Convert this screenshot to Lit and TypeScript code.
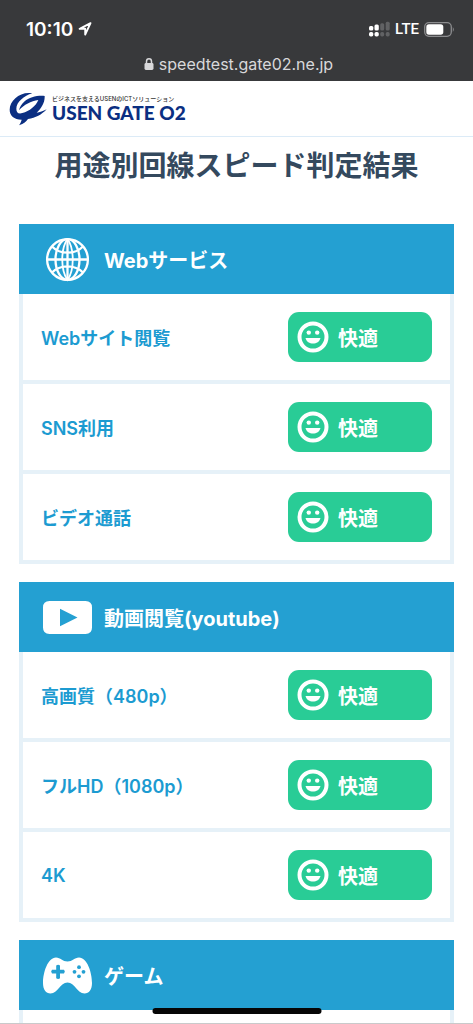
import { LitElement, html, css, svg } from "lit";
import { customElement, property } from "lit/decorators.js";

type IconName = "web" | "video" | "game";

interface Category {
  icon: IconName;
  title: string;
  items: string[];
}

const CATEGORIES: Category[] = [
  { icon: "web", title: "Webサービス", items: ["Webサイト閲覧", "SNS利用", "ビデオ通話"] },
  { icon: "video", title: "動画閲覧(youtube)", items: ["高画質（480p）", "フルHD（1080p）", "4K"] },
  { icon: "game", title: "ゲーム", items: [] },
];

const ICONS = {
  web: svg`<g fill="none" stroke="#fff" stroke-width="2.3">
    <circle cx="24.5" cy="24.5" r="20.4"/>
    <ellipse cx="24.5" cy="24.5" rx="12" ry="20.4"/>
    <path d="M24.500 4V45M4 24.500H45M9 11.500Q15 17.700 24.500 17.700T40 11.500M9 37.500Q15 31.300 24.500 31.300T40 37.500"/>
    <path stroke-width="1.800" d="M24.500 4C17.500 14 17.500 35 24.500 45C31.500 35 31.500 14 24.500 4"/>
  </g>`,
  video: svg`<path fill="#fff" fill-rule="evenodd" d="M6.500 8h36q6.500 0 6.500 6.500v20q0 6.500-6.500 6.500h-36q-6.500 0-6.500-6.500v-20q0-6.500 6.500-6.500zM17 15.800v17.400l17.500-8.700z"/>`,
  game: svg`<path fill="#fff" d="M13 6.500C17.500 6.500 19.500 10.500 24.500 10.500S31.500 6.500 36 6.500C44 6.500 49 21 49 32C49 38.500 46 42.500 41.500 42.500C34 42.500 32 31.500 24.500 31.500S15 42.500 7.500 42.500C3 42.500 0 38.500 0 32C0 21 5 6.500 13 6.500Z"/>
    <g fill="#24a0d2">
      <path d="M13.200 14.500q1.900-1.500 3.800 0v4.300h4q1.700 1.800 0 3.600h-4v4.800q-1.900 1.500-3.800 0v-4.800h-4.200q-1.700-1.800 0-3.600h4.200z"/>
      <circle cx="36" cy="16.200" r="1.900"/><circle cx="31.500" cy="20.800" r="1.900"/>
      <circle cx="40.500" cy="20.800" r="1.900"/><circle cx="36" cy="25.300" r="1.900"/>
    </g>`,
};

@customElement("status-bar")
class StatusBar extends LitElement {
  static styles = css`
    :host {
      display: block;
      background: #38393b;
      color: #fff;
      padding: 17px 18px 5px 26px;
    }
    .row { display: flex; align-items: center; height: 24px; }
    .time { font-size: 19px; font-weight: 600; }
    .arrow { margin-left: 5px; }
    .right { margin-left: auto; display: flex; align-items: center; gap: 5px; }
    .lte { font-family: Roboto, sans-serif; font-size: 15px; font-weight: 500; }
    .url {
      display: flex;
      align-items: center;
      justify-content: center;
      gap: 5px;
      width: 100%;
      height: 24px;
      margin: 11px 0 0;
      padding: 0 4px 0 0;
      border: 0;
      background: none;
      color: #d8d8da;
      font: inherit;
      font-size: 16px;
    }
    svg { display: block; flex: none; }
  `;
  render() {
    return html`
      <div class="row">
        <span class="time">10:10</span>
        <svg class="arrow" width="14" height="14" viewBox="0 0 14 14" fill="none" stroke="#fff" stroke-width="1.900" stroke-linejoin="round">
          <path d="M12.500 1.200L1.600 6.800H7.200V12.600Z"/>
        </svg>
        <div class="right">
          <svg width="21" height="16" viewBox="0 0 21 16">
            <g fill="#fff"><rect x="0" y="5" width="4.300" height="4.500" rx="1.500"/><rect x="5.500" y="3.500" width="4.300" height="6" rx="1.500"/>
            <rect x="0" y="11" width="4.300" height="4.500" rx="1.700"/><rect x="5.500" y="11" width="4.300" height="4.500" rx="1.700"/></g>
            <g fill="#616264"><rect x="11.200" y="2.200" width="4" height="7.300" rx="1.500"/><rect x="16.700" y="0.700" width="4" height="8.800" rx="1.500"/>
            <rect x="11.200" y="11" width="4" height="4.500" rx="1.700"/><rect x="16.700" y="11" width="4" height="4.500" rx="1.700"/></g>
          </svg>
          <span class="lte">LTE</span>
          <svg width="31" height="15" viewBox="0 0 31 15">
            <rect x="0.700" y="0.700" width="26.600" height="13.600" rx="4.200" fill="none" stroke="#8b8c8e" stroke-width="1.300"/>
            <rect x="2.300" y="2.300" width="17" height="10.400" rx="2.600" fill="#fff"/>
            <path d="M28.800 5q2 2.500 0 5z" fill="#8b8c8e"/>
          </svg>
        </div>
      </div>
      <button class="url" type="button">
        <svg width="10" height="12" viewBox="0 0 10 12">
          <rect x="0.500" y="5" width="9" height="7" rx="1.400" fill="#d8d8da"/>
          <path d="M2.500 5.500V3.500a2.500 2.700 0 0 1 5 0V5.500" fill="none" stroke="#d8d8da" stroke-width="1.500"/>
        </svg>
        <span>speedtest.gate02.ne.jp</span>
      </button>
    `;
  }
}

@customElement("site-header")
class SiteHeader extends LitElement {
  static styles = css`
    :host { display: block; background: #fff; border-bottom: 1px solid #dcebf7; }
    .brand {
      display: flex;
      align-items: center;
      gap: 5px;
      height: 55px;
      padding-left: 9px;
      color: #0b2f82;
      text-decoration: none;
    }
    .words { display: flex; flex-direction: column; white-space: nowrap; }
    .tag { font-size: 6px; line-height: 9px; font-weight: 500; color: #333; }
    .name { font-family: Lato, sans-serif; font-size: 19px; line-height: 20px; font-weight: 900; }
    svg { display: block; }
  `;
  render() {
    return html`
      <a class="brand" href="#">
        <svg width="38" height="34" viewBox="10 7 114 102" fill="#0b2f82">
          <path d="M80 11C45 4 12 32 12 60C12 78 25 89 48 90C47 95 44 101 40 107C55 102 62 95 67 88C90 85 108 75 123 59C112 65 102 68 93 69C108 56 118 38 117 19C95 17 70 23 57 35C47 44 42 53 40 62C55 45 76 34 98 31C90 50 72 64 50 70C38 74 32 68 32 57C32 38 55 18 80 11Z"/>
        </svg>
        <span class="words">
          <span class="tag">ビジネスを支えるUSENのICTソリューション</span>
          <span class="name">USEN GATE O2</span>
        </span>
      </a>
    `;
  }
}

@customElement("result-badge")
class ResultBadge extends LitElement {
  static styles = css`
    :host {
      display: flex;
      align-items: center;
      gap: 9px;
      box-sizing: border-box;
      width: 144px;
      height: 50px;
      padding-left: 9px;
      border-radius: 11px;
      background: #29cc96;
      color: #fff;
      font-size: 20px;
      font-weight: 700;
    }
    svg { display: block; }
  `;
  render() {
    return html`
      <svg width="32" height="32" viewBox="0 0 32 32" aria-hidden="true">
        <circle cx="16" cy="16" r="13.500" fill="none" stroke="#fff" stroke-width="4"/>
        <circle cx="11.800" cy="11.600" r="2.200" fill="#fff"/>
        <circle cx="20.200" cy="11.600" r="2.200" fill="#fff"/>
        <path d="M8.500 17h15c-1 3.800-4 5.500-7.500 5.500S9.500 20.800 8.500 17z" fill="#fff"/>
      </svg>
      <span>快適</span>
    `;
  }
}

@customElement("category-card")
class CategoryCard extends LitElement {
  @property({ attribute: false }) category!: Category;

  static styles = css`
    :host { display: block; }
    .head {
      display: flex;
      align-items: center;
      gap: 12px;
      height: 70px;
      padding: 0 24px;
      background: #24a0d2;
      color: #fff;
    }
    .head svg { display: block; flex: none; }
    .title { margin: 0; font-size: 20px; font-weight: 700; }
    .list {
      margin: 0;
      padding: 0;
      min-height: 90px;
      list-style: none;
      border: solid #e6f1f8;
      border-width: 0 4px;
    }
    .item {
      display: flex;
      align-items: center;
      justify-content: space-between;
      padding: 18px;
      border-bottom: 4px solid #e6f1f8;
      color: #1c9bd1;
      font-size: 18px;
      font-weight: 600;
    }
  `;
  render() {
    const { icon, title, items } = this.category;
    return html`
      <header class="head">
        <svg width="49" height="49" viewBox="0 0 49 49" aria-hidden="true">${ICONS[icon]}</svg>
        <h2 class="title">${title}</h2>
      </header>
      <ul class="list">
        ${items.map((label) => html`<li class="item"><span>${label}</span><result-badge></result-badge></li>`)}
      </ul>
    `;
  }
}

@customElement("app-root")
class AppRoot extends LitElement {
  static styles = css`
    :host {
      display: block;
      position: relative;
      box-sizing: border-box;
      height: 100vh;
      overflow: hidden;
      background: #fff;
      border-bottom: 1px solid #c9cacb;
      font-family: Inter, "Noto Sans CJK JP", sans-serif;
    }
    .main { padding: 8px 19px 0; }
    .heading {
      margin: 0 0 37px;
      color: #34495e;
      font-size: 28px;
      line-height: 42px;
      font-weight: 700;
      text-align: center;
      white-space: nowrap;
    }
    .cards { display: flex; flex-direction: column; gap: 18px; }
    .home {
      position: absolute;
      left: 50%;
      bottom: 9px;
      width: 169px;
      height: 6px;
      border-radius: 3px;
      background: #060606;
      transform: translateX(-50%);
    }
  `;
  render() {
    return html`
      <status-bar></status-bar>
      <site-header></site-header>
      <main class="main">
        <h1 class="heading">用途別回線スピード判定結果</h1>
        <div class="cards">
          ${CATEGORIES.map((c) => html`<category-card .category=${c}></category-card>`)}
        </div>
      </main>
      <div class="home"></div>
    `;
  }
}
